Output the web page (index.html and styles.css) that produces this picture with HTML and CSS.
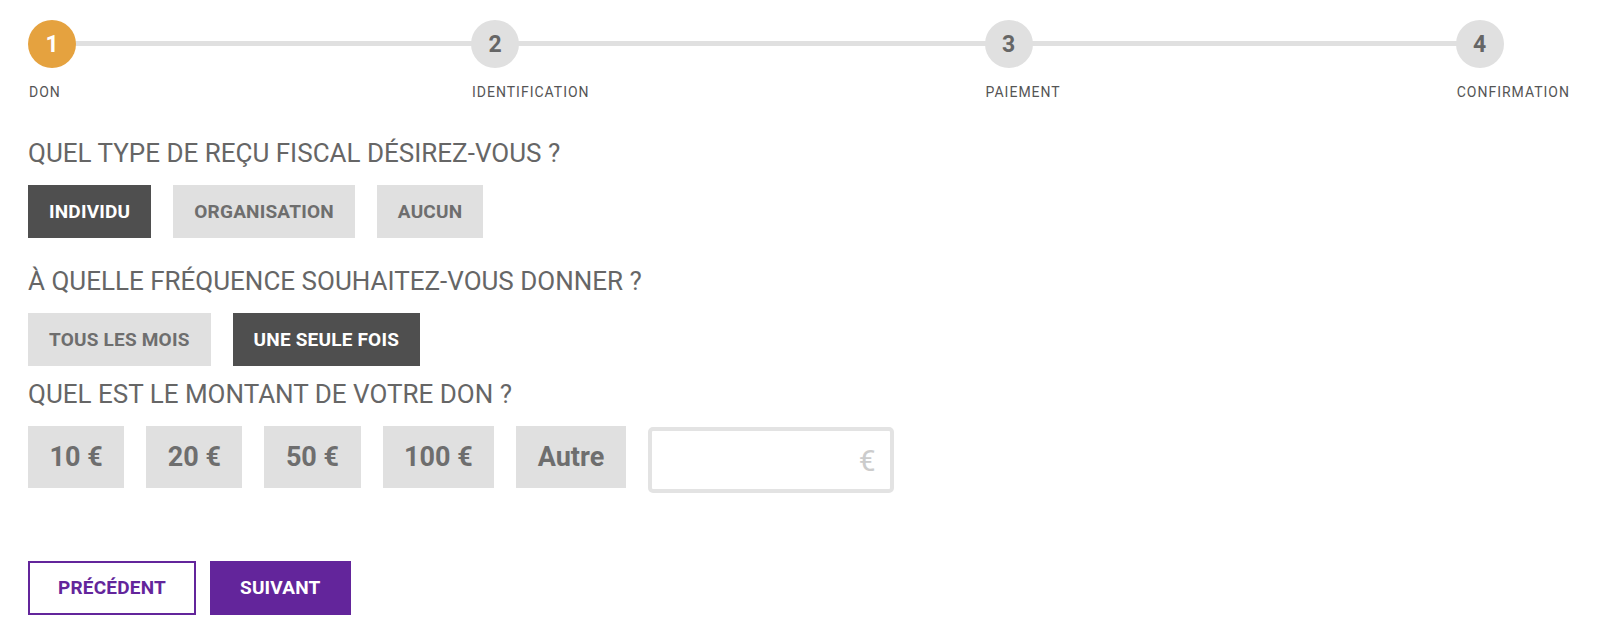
FILE: index.html
```html
<!DOCTYPE html>
<html lang="fr">
<head>
<meta charset="utf-8">
<title>Don</title>
<link rel="stylesheet" href="styles.css">
</head>
<body>
<main class="page">
  <ol class="stepper">
    <li class="step step-active"><span class="step-num">1</span><span class="step-label">DON</span></li>
    <li class="step"><span class="step-num">2</span><span class="step-label">IDENTIFICATION</span></li>
    <li class="step"><span class="step-num">3</span><span class="step-label">PAIEMENT</span></li>
    <li class="step"><span class="step-num">4</span><span class="step-label">CONFIRMATION</span></li>
  </ol>

  <section class="group group-type">
    <h2 class="question">QUEL TYPE DE REÇU FISCAL DÉSIREZ-VOUS ?</h2>
    <div class="choices">
      <button class="choice choice-on">INDIVIDU</button>
      <button class="choice">ORGANISATION</button>
      <button class="choice">AUCUN</button>
    </div>
  </section>

  <section class="group group-freq">
    <h2 class="question">À QUELLE FRÉQUENCE SOUHAITEZ-VOUS DONNER ?</h2>
    <div class="choices">
      <button class="choice">TOUS LES MOIS</button>
      <button class="choice choice-on">UNE SEULE FOIS</button>
    </div>
  </section>

  <section class="group group-amount">
    <h2 class="question">QUEL EST LE MONTANT DE VOTRE DON ?</h2>
    <div class="amounts">
      <button class="amount">10 €</button>
      <button class="amount">20 €</button>
      <button class="amount">50 €</button>
      <button class="amount">100 €</button>
      <button class="amount">Autre</button>
      <label class="amount-input"><input type="text" aria-label="Autre montant"><span class="currency">€</span></label>
    </div>
  </section>

  <nav class="nav">
    <button class="nav-btn nav-prev">PRÉCÉDENT</button>
    <button class="nav-btn nav-next">SUIVANT</button>
  </nav>
</main>
</body>
</html>
```

FILE: styles.css
```css
* { box-sizing: border-box; }

html, body {
  margin: 0;
  padding: 0;
  background: #ffffff;
}

body {
  font-family: Roboto, "Liberation Sans", Arial, sans-serif;
  color: #666666;
}

.page {
  padding: 20px 30px 0 28px;
}

/* Stepper */
.stepper {
  position: relative;
  list-style: none;
  margin: 0;
  padding: 0;
  display: flex;
  justify-content: space-between;
}

.stepper::before {
  content: "";
  position: absolute;
  left: 24px;
  right: 90px;
  top: 21px;
  height: 5px;
  background: #e0e0e0;
  z-index: 0;
}

.step {
  position: relative;
  z-index: 1;
  display: flex;
  flex-direction: column;
  align-items: flex-start;
}

.step-num {
  width: 48px;
  height: 48px;
  border-radius: 50%;
  background: #e0e0e0;
  color: #666666;
  font-size: 23px;
  font-weight: 700;
  display: flex;
  align-items: center;
  justify-content: center;
}

.step-active .step-num {
  background: #e5a23f;
  color: #ffffff;
}

.step-label {
  margin-top: 16px;
  font-size: 14px;
  line-height: 16px;
  letter-spacing: 1px;
  color: #555555;
  padding-left: 1px;
}

/* Questions */
.group { margin-top: 28px; }
.group-type { margin-top: 38px; }
.group-amount { margin-top: 13px; }

.question {
  margin: 0 0 17px;
  font-size: 26px;
  line-height: 30px;
  font-weight: 400;
  color: #666666;
}

.choices {
  display: flex;
  gap: 22px;
}

.choice {
  font-family: inherit;
  border: 0;
  margin: 0;
  padding: 16px 21px;
  font-size: 19px;
  line-height: 21px;
  font-weight: 700;
  letter-spacing: 0.2px;
  background: #e0e0e0;
  color: #6e6e6e;
  cursor: pointer;
}

.choice-on {
  background: #4f4f4f;
  color: #ffffff;
}

/* Amounts */
.amounts {
  display: flex;
  align-items: flex-start;
  gap: 22px;
}

.amount {
  font-family: inherit;
  border: 0;
  margin: 0;
  padding: 14px 21.5px;
  font-size: 27px;
  line-height: 34px;
  font-weight: 700;
  background: #e0e0e0;
  color: #6e6e6e;
  cursor: pointer;
}

.amount-input {
  display: flex;
  align-items: center;
  width: 246px;
  height: 66px;
  margin-top: 1px;
  border: 4px solid #e3e3e3;
  border-radius: 5px;
  padding: 0 14px 0 10px;
}

.amount-input input {
  flex: 1;
  min-width: 0;
  border: 0;
  outline: none;
  font-family: inherit;
  font-size: 24px;
  background: transparent;
}

.currency {
  font-size: 30px;
  color: #cccccc;
}

/* Navigation */
.nav {
  display: flex;
  gap: 14px;
  margin-top: 68px;
}

.nav-btn {
  font-family: inherit;
  margin: 0;
  padding: 15px 28px;
  font-size: 19px;
  line-height: 20px;
  font-weight: 700;
  letter-spacing: 0.2px;
  border: 2px solid #63259b;
  cursor: pointer;
}

.nav-prev {
  background: #ffffff;
  color: #63259b;
}

.nav-next {
  background: #63259b;
  color: #ffffff;
}
```
